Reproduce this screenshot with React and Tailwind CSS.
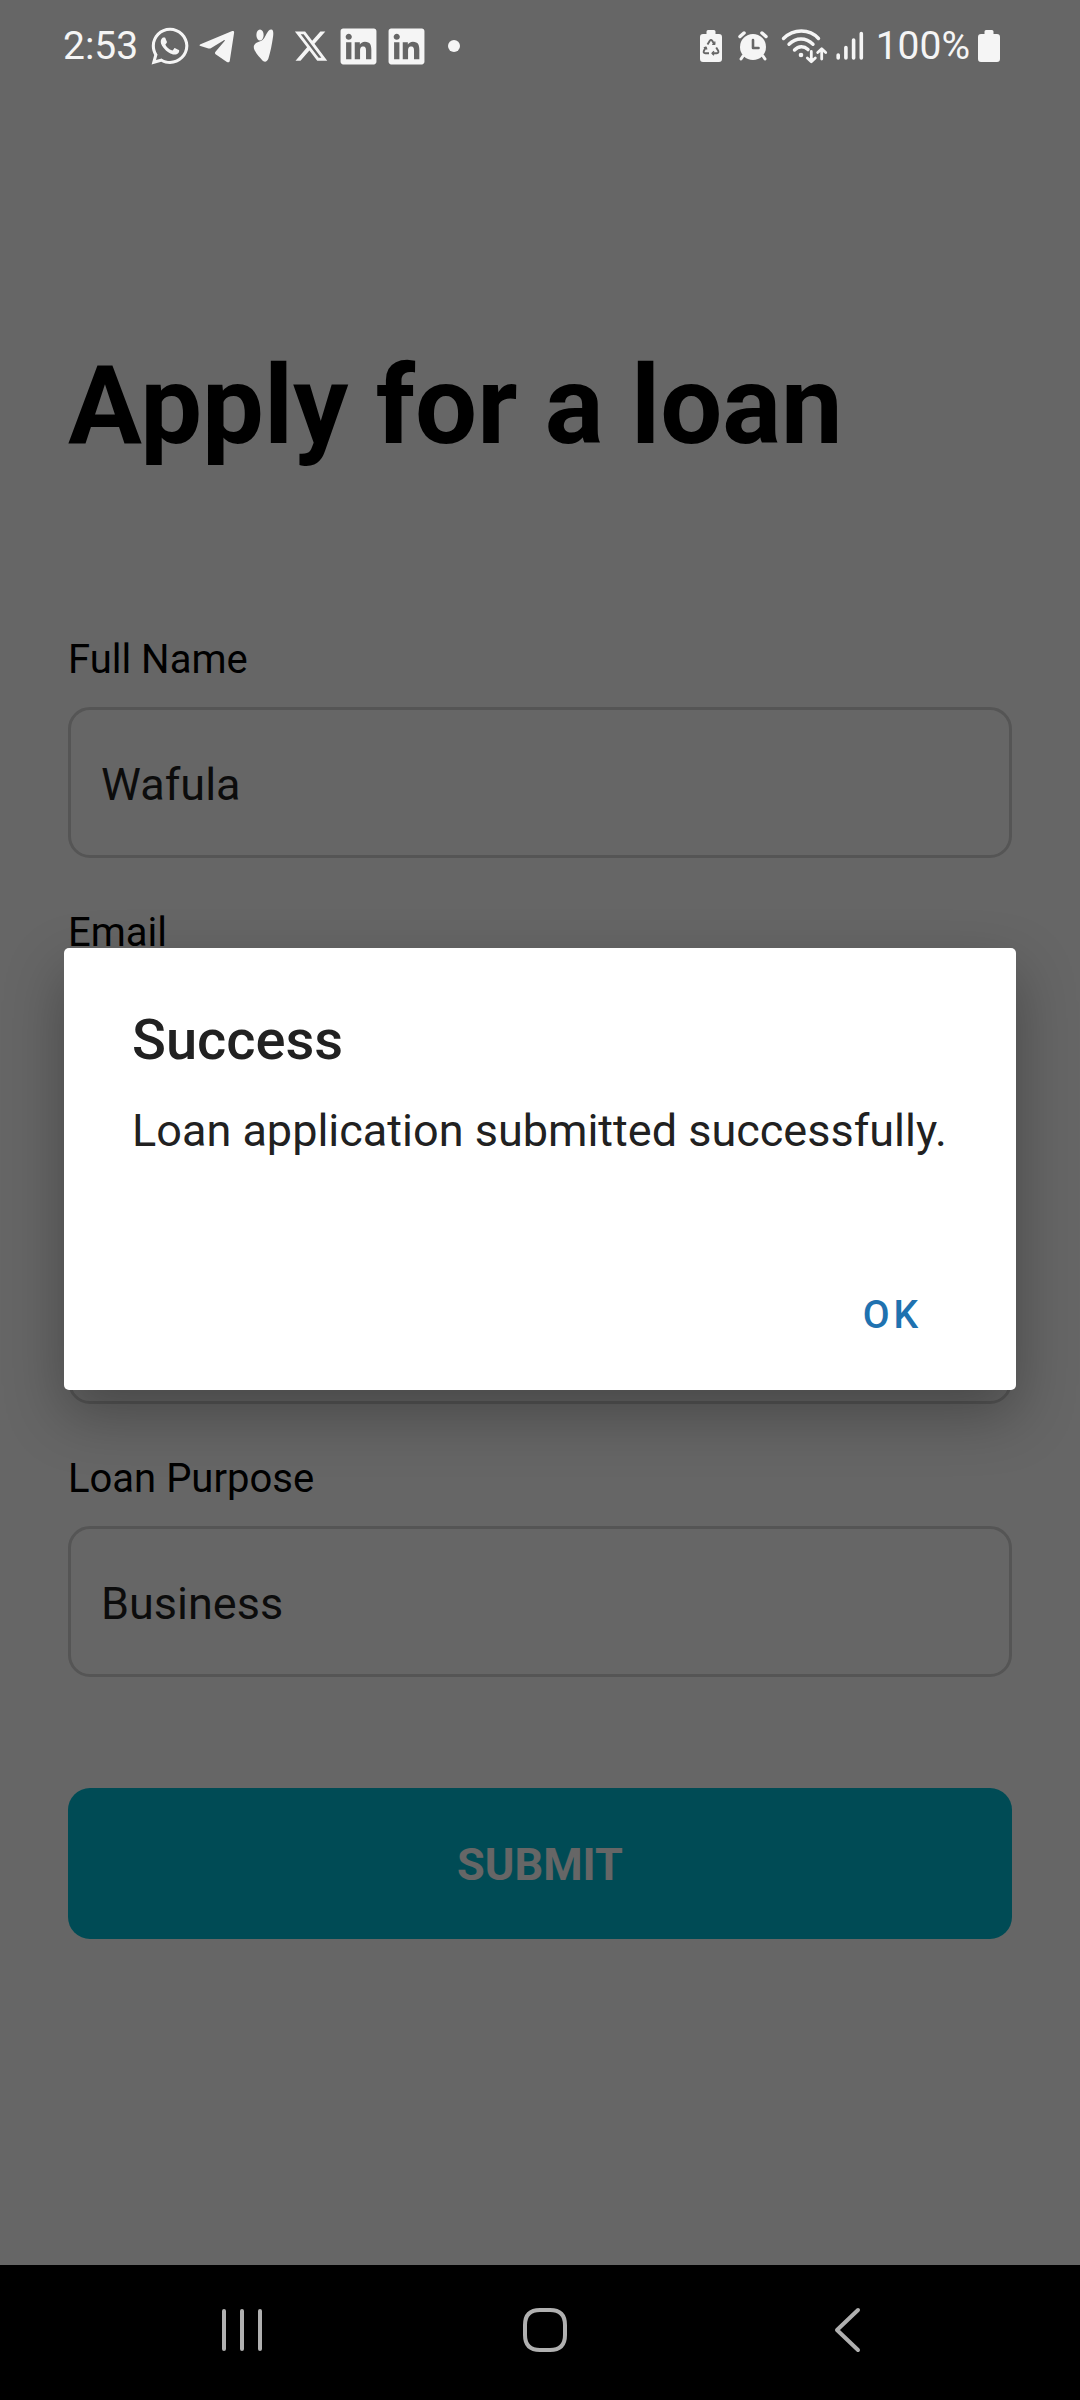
import { FaWhatsapp, FaLinkedin } from "react-icons/fa";
import { FaXTwitter } from "react-icons/fa6";

function TelegramIcon() {
  return (
    <svg viewBox="0 0 36 36" className="size-9" fill="currentColor" aria-hidden="true">
      <path d="M1.5 16.2 33.2 3.1c1.3-.5 2.1.2 1.9 1.6l-4.3 28c-.3 1.6-1.6 2.1-2.9 1.2L16.600 26.200c-.9-.7-.9-1.500-.1-2.400l8.900-10.600c.9-1.100.2-1.500-.9-.8L11.800 20.200c-.8.5-1.500.5-2.300.2L1.500 18c-1.300-.4-1.300-1.200 0-1.800z" />
    </svg>
  );
}

function FigureIcon() {
  return (
    <svg viewBox="0 0 36 36" className="size-9" fill="currentColor" aria-hidden="true">
      <ellipse cx="14" cy="7" rx="3.600" ry="5.600" />
      <path d="M8 17.500c1.500-3.300 5.500-3.600 8.500-5.500C20 9.600 21 1.500 25.300 1.600c2.500.2 2.100 4.400 1.700 7.400-1 7-2.600 15.500-4.600 21.500-1.100 3.500-4.200 4.200-6.400 1.500-3-3.500-9.500-10-8-14.500z" />
    </svg>
  );
}

function BatteryIcon({ recycle }) {
  return (
    <svg viewBox="0 0 22 32" className="h-8 w-[22px]" aria-hidden="true">
      <path
        d="M6.500 1.500Q6.500 0 8 0h6q1.500 0 1.500 1.500V4H19q3 0 3 3v22q0 3-3 3H3q-3 0-3-3V7q0-3 3-3h3.500z"
        fill="currentColor"
      />
      {recycle && (
        <g fill="none" stroke="#666" strokeWidth="1.900" strokeLinejoin="round">
          <path d="M7.500 14.500 9.800 10.700q1.200-1.700 2.400 0l2.300 3.800M16.200 17.500l2 3.300q.8 2.200-1.400 2.400h-4.600M9 23.200H5.300q-2.300-.2-1.400-2.400l2-3.500" />
          <path d="M12.200 14.300h2.600v-2.800M14 21.200l-2 2 2 2M3.800 17.900l2.200-.8.9 2.400" strokeWidth="1.300" />
        </g>
      )}
    </svg>
  );
}

function AlarmIcon() {
  return (
    <svg viewBox="0 0 30 30" className="size-[30px]" fill="none" stroke="currentColor" strokeLinecap="round" aria-hidden="true">
      <circle cx="15" cy="16" r="13" fill="currentColor" stroke="none" />
      <path d="M2 5.500 6 2M28 5.500 24 2" strokeWidth="3.500" />
      <path d="m5 25-2 3m22-3 2 3" strokeWidth="3" />
      <path d="M15 9v8h5.500" stroke="#666" strokeWidth="2.600" strokeLinejoin="round" />
    </svg>
  );
}

function WifiIcon() {
  return (
    <svg viewBox="0 0 48 36" className="h-9 w-12" fill="none" stroke="currentColor" strokeWidth="3.400" strokeLinecap="round" aria-hidden="true">
      <path d="M3.500 10.500C13.500.5 29.500.5 38.500 10.500M9 16.200c7-7 17-7 24 0M14.500 22c4-4.200 9.500-4.200 13.500-.4" />
      <circle cx="21" cy="27" r="2.300" fill="currentColor" stroke="none" />
      <path d="M31.300 23.500v10m-4-3.600 4 3.800 4-3.800M41.700 31V21m-4 3.600 4-3.800 4 3.800" strokeWidth="2.800" strokeLinejoin="round" />
    </svg>
  );
}

function SignalIcon() {
  return (
    <svg viewBox="0 0 30 30" className="size-[30px]" fill="none" stroke="currentColor" strokeWidth="3.600" strokeLinecap="round" aria-hidden="true">
      <path d="M2.200 24v3M9.900 16.500V27M17.600 9v18M25.300 2.500V27" />
    </svg>
  );
}

function StatusBar() {
  return (
    <header className="relative z-20 flex items-center justify-between pt-[22px] pr-20 pl-[63px] text-[39px] leading-[48px] text-[#f5f5f5]">
      <div className="flex items-center gap-[11px]">
        <time className="pr-[3px]">2:53</time>
        <FaWhatsapp className="size-[42px] -mx-[3px]" />
        <TelegramIcon />
        <FigureIcon />
        <FaXTwitter className="size-9" />
        <FaLinkedin className="size-[41px] -mx-[2px]" />
        <FaLinkedin className="size-[41px] -mx-[2px]" />
        <span className="flex size-9 items-center justify-center">
          <span className="size-3 rounded-full bg-current" />
        </span>
      </div>
      <div className="flex items-center gap-2">
        <BatteryIcon recycle />
        <span className="pr-1 pl-2">
          <AlarmIcon />
        </span>
        <WifiIcon />
        <SignalIcon />
        <span className="pl-[2px]">100%</span>
        <BatteryIcon />
      </div>
    </header>
  );
}

function Field({ id, label, type = "text", value = "" }) {
  return (
    <div className="flex flex-col gap-[23px]">
      <label htmlFor={id} className="text-[40px] leading-[48px] text-black">
        {label}
      </label>
      <input
        id={id}
        type={type}
        defaultValue={value}
        className="h-[151px] w-full rounded-[22px] border-[3px] border-[#d4d4d4] bg-white px-[30px] pt-[3px] text-[45px] text-[#1f1f1f]"
      />
    </div>
  );
}

function SuccessDialog() {
  return (
    <div className="absolute inset-0 z-10 flex items-center justify-center bg-black/60 px-16 pt-[73px]">
      <section
        role="alertdialog"
        aria-labelledby="dialog-title"
        aria-describedby="dialog-message"
        className="w-full rounded-[5px] bg-white px-[68px] pt-[60px] pb-[25px] text-[#212121] shadow-[0_24px_60px_rgba(0,0,0,0.3)]"
      >
        <h2 id="dialog-title" className="text-[56px] leading-[64px] font-medium">
          Success
        </h2>
        <p id="dialog-message" className="mt-[31px] text-[45px] leading-[56px]">
          Loan application submitted successfully.
        </p>
        <div className="mt-[106px] flex justify-end">
          <button type="button" className="px-[26px] py-6 text-[39px] leading-[52px] font-medium tracking-widest text-[#1f72b0]">
            OK
          </button>
        </div>
      </section>
    </div>
  );
}

function NavigationBar() {
  return (
    <nav className="flex h-[135px] items-center justify-between bg-black pr-[173px] pb-[6px] pl-[182px] text-[#b0b0b0]">
      <button type="button" aria-label="Recent apps" className="flex w-[120px] justify-center">
        <svg viewBox="0 0 44 48" className="h-12 w-11" fill="none" stroke="currentColor" strokeWidth="4" strokeLinecap="round">
          <path d="M4 5v38M22 5v38M40 5v38" />
        </svg>
      </button>
      <button type="button" aria-label="Home" className="flex w-[120px] justify-center">
        <svg viewBox="0 0 48 48" className="size-12" fill="none" stroke="currentColor" strokeWidth="4">
          <path d="M19 4h10Q44 4 44 19v10Q44 44 29 44H19Q4 44 4 29V19Q4 4 19 4z" />
        </svg>
      </button>
      <button type="button" aria-label="Back" className="flex w-[120px] justify-center">
        <svg viewBox="0 0 48 48" className="size-12" fill="none" stroke="currentColor" strokeWidth="4" strokeLinecap="round" strokeLinejoin="round">
          <path d="M35 4 14 24l21 20" />
        </svg>
      </button>
    </nav>
  );
}

export default function App() {
  return (
    <div className="flex min-h-screen flex-col bg-white font-['Roboto',sans-serif]">
      <div className="relative flex-1">
        <StatusBar />
        <main className="px-[68px] pb-20">
          <h1 className="pt-[270px] text-[110px] leading-[132px] font-bold text-black">Apply for a loan</h1>
          <form className="mt-[164px] flex flex-col gap-[51px]" onSubmit={(event) => event.preventDefault()}>
            <Field id="full-name" label="Full Name" value="Wafula" />
            <Field id="email" label="Email" type="email" />
            <Field id="loan-amount" label="Loan Amount" />
            <Field id="loan-purpose" label="Loan Purpose" value="Business" />
            <button type="submit" className="mt-[60px] h-[151px] w-full rounded-[22px] bg-[#00bcd4] pt-[2px] text-[45px] font-bold text-white">
              SUBMIT
            </button>
          </form>
        </main>
        <SuccessDialog />
      </div>
      <NavigationBar />
    </div>
  );
}
